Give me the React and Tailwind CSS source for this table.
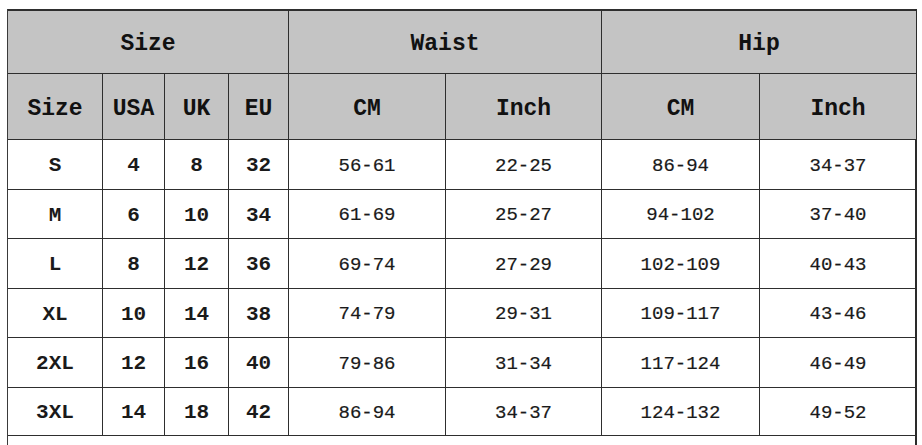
const rows = [
  ['S', '4', '8', '32', '56-61', '22-25', '86-94', '34-37'],
  ['M', '6', '10', '34', '61-69', '25-27', '94-102', '37-40'],
  ['L', '8', '12', '36', '69-74', '27-29', '102-109', '40-43'],
  ['XL', '10', '14', '38', '74-79', '29-31', '109-117', '43-46'],
  ['2XL', '12', '16', '40', '79-86', '31-34', '117-124', '46-49'],
  ['3XL', '14', '18', '42', '86-94', '34-37', '124-132', '49-52'],
];

const rowHeights = ['h-[50px]', 'h-[49px]', 'h-[50px]', 'h-[49px]', 'h-[50px]', 'h-[48px]'];

function Head({ span = '', children }) {
  return (
    <div className={`${span} flex items-center justify-center border-r border-b border-[#2e2e2e] bg-[#c4c4c4] pt-[5px] text-[23px] font-bold text-[#111]`}>
      {children}
    </div>
  );
}

function Cell({ bold, className = '', children }) {
  return (
    <div
      className={`flex items-center justify-center border-r border-b border-[#2e2e2e] pt-[3px] text-[#1a1a1a] ${
        bold ? 'text-[21px] font-bold' : 'text-[19px] [-webkit-text-stroke:0.2px_#1a1a1a]'
      } ${className}`}
    >
      {children}
    </div>
  );
}

export default function App() {
  return (
    <div className="h-[445px] w-[922px] bg-white font-['Liberation_Mono',monospace]">
      <div className="ml-[7px] h-full w-[910px] border-l border-r-2 border-[#3a3a3a] border-r-[#2a2a2a]">
        <div className="mt-[9px] grid grid-cols-[95px_62px_64px_60px_157px_156px_158px_156px] border-t-2 border-[#2e2e2e]">
          <Head span="col-span-4 h-[63px]">Size</Head>
          <Head span="col-span-2 h-[63px]">Waist</Head>
          <Head span="col-span-2 h-[63px] border-r-0">Hip</Head>

          <Head span="h-[66px]">Size</Head>
          <Head span="h-[66px]">USA</Head>
          <Head span="h-[66px]">UK</Head>
          <Head span="h-[66px]">EU</Head>
          <Head span="h-[66px]">CM</Head>
          <Head span="h-[66px]">Inch</Head>
          <Head span="h-[66px]">CM</Head>
          <Head span="h-[66px] border-r-0">Inch</Head>

          {rows.map((r, i) =>
            r.map((v, j) => (
              <Cell key={`${i}-${j}`} bold={j < 4} className={`${rowHeights[i]} ${j === 7 ? 'border-r-0' : ''}`}>
                {v}
              </Cell>
            ))
          )}
        </div>
      </div>
    </div>
  );
}
